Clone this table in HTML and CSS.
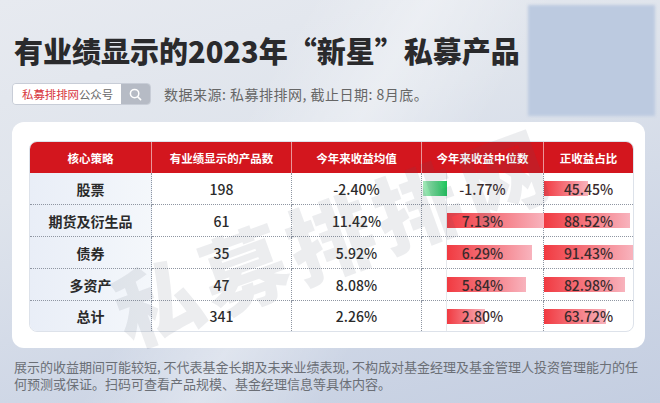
FILE: index.html
```html
<!DOCTYPE html>
<html lang="zh-CN">
<head>
<meta charset="utf-8">
<title>有业绩显示的2023年“新星”私募产品</title>
<link rel="stylesheet" href="styles.css">
</head>
<body>
<div class="glow"></div>
<div class="page">
  <h1 class="title">有业绩显示的2023年“新星”私募产品</h1>
  <div class="sub">
    <div class="search">
      <div class="search-txt"><span class="brand">私募排排网</span>公众号</div>
      <div class="search-btn">
        <svg width="13" height="13" viewBox="0 0 13 13"><circle cx="5.6" cy="5.6" r="4.2" fill="none" stroke="#fff" stroke-width="1.5"/><line x1="8.7" y1="8.7" x2="11.6" y2="11.6" stroke="#fff" stroke-width="1.6" stroke-linecap="round"/></svg>
      </div>
    </div>
    <div class="source">数据来源: 私募排排网, 截止日期: 8月底。</div>
  </div>
  <div class="card">
    <table class="tbl">
      <colgroup>
        <col class="c1"><col class="c2"><col class="c3"><col class="c4"><col class="c5">
      </colgroup>
      <thead>
        <tr><th>核心策略</th><th>有业绩显示的产品数</th><th>今年来收益均值</th><th>今年来收益中位数</th><th>正收益占比</th></tr>
      </thead>
      <tbody>
        <tr>
          <td class="name">股票</td><td class="num">198</td><td class="num">-2.40%</td>
          <td class="num bar axis"><span class="fill neg" style="width:24px"></span><span class="val">-1.77%</span></td>
          <td class="num bar"><span class="fill" style="width:44px"></span><span class="val">45.45%</span></td>
        </tr>
        <tr>
          <td class="name">期货及衍生品</td><td class="num">61</td><td class="num">11.42%</td>
          <td class="num bar axis"><span class="fill pos" style="width:97px"></span><span class="val">7.13%</span></td>
          <td class="num bar"><span class="fill" style="width:86px"></span><span class="val">88.52%</span></td>
        </tr>
        <tr>
          <td class="name">债券</td><td class="num">35</td><td class="num">5.92%</td>
          <td class="num bar axis"><span class="fill pos" style="width:85px"></span><span class="val">6.29%</span></td>
          <td class="num bar"><span class="fill" style="width:89px"></span><span class="val">91.43%</span></td>
        </tr>
        <tr>
          <td class="name">多资产</td><td class="num">47</td><td class="num">8.08%</td>
          <td class="num bar axis"><span class="fill pos" style="width:79px"></span><span class="val">5.84%</span></td>
          <td class="num bar"><span class="fill" style="width:81px"></span><span class="val">82.98%</span></td>
        </tr>
        <tr>
          <td class="name">总计</td><td class="num">341</td><td class="num">2.26%</td>
          <td class="num bar axis"><span class="fill pos" style="width:38px"></span><span class="val">2.80%</span></td>
          <td class="num bar"><span class="fill" style="width:62px"></span><span class="val">63.72%</span></td>
        </tr>
      </tbody>
    </table>
    <div class="watermark">私募排排网</div>
  </div>
  <p class="note">展示的收益期间可能较短, 不代表基金长期及未来业绩表现, 不构成对基金经理及基金管理人投资管理能力的任何预测或保证。扫码可查看产品规模、基金经理信息等具体内容。</p>
</div>
</body>
</html>
```

FILE: styles.css
```css
html, body {
  margin: 0;
  padding: 0;
}
body {
  width: 660px;
  height: 403px;
  overflow: hidden;
  position: relative;
  font-family: "Noto Sans CJK SC", "Noto Sans", sans-serif;
  background:
    linear-gradient(120deg, rgba(255,255,255,0) 35%, rgba(255,255,255,0.35) 48%, rgba(255,255,255,0) 62%),
    linear-gradient(165deg, #e7eaf0 0%, #dfe4ec 35%, #cfd7e6 70%, #c4cee1 100%);
}
.glow {
  position: absolute;
  left: 528px;
  top: 5px;
  width: 127px;
  height: 111px;
  background: #bccae0;
  filter: blur(1.5px);
}
.page {
  position: relative;
  padding: 0 15px 0 12px;
}
.title {
  margin: 0 0 0 2px;
  padding-top: 32px;
  font-size: 29px;
  line-height: 36px;
  font-weight: 900;
  color: #2a2a2c;
  white-space: nowrap;
}
.sub {
  display: flex;
  align-items: center;
  margin-top: 15px;
  height: 22px;
}
.search {
  display: flex;
  height: 20px;
  border: 1px solid #c8cdd7;
  border-radius: 4px;
  overflow: hidden;
}
.search-txt {
  background: #fff;
  width: 99px;
  padding-left: 9px;
  font-size: 11.4px;
  line-height: 20px;
  color: #6a6a6a;
  white-space: nowrap;
}
.brand {
  color: #d7343b;
}
.search-btn {
  width: 29px;
  background: #b6bbc5;
  display: flex;
  align-items: center;
  justify-content: center;
}
.source {
  margin-left: 13px;
  font-size: 14px;
  letter-spacing: 0.5px;
  color: #666;
  white-space: nowrap;
}
.card {
  position: relative;
  margin-top: 17px;
  background: #fff;
  border-radius: 12px;
  padding: 19px 13px 16px 17px;
}
.tbl {
  position: relative;
  width: 603px;
  table-layout: fixed;
  border-collapse: separate;
  border-spacing: 0;
  border: 1px solid #dde2ea;
  border-radius: 8px;
  overflow: hidden;
}
.c1 { width: 122px; }
.c2 { width: 140px; }
.c3 { width: 130px; }
.c4 { width: 122px; }
.c5 { width: 89px; }
.tbl th {
  background: #d3161e;
  color: #fff;
  font-size: 11.5px;
  font-weight: 700;
  height: 31px;
  padding: 0;
  border-right: 1px solid rgba(255,255,255,0.55);
  text-align: center;
}
.tbl th:last-child { border-right: 0; }
.tbl td {
  height: 31px;
  padding: 0;
  text-align: center;
  color: #2a2a2a;
  font-size: 14px;
  border-right: 1px dotted #8f96a2;
  border-bottom: 1px dotted #8f96a2;
}
.tbl td:last-child { border-right: 0; }
.tbl tr:last-child td { border-bottom: 0; height: 30px; }
.name {
  font-weight: 700;
  background: linear-gradient(90deg, #e9eef7, #f4f7fb);
}
.num {
  font-weight: 500;
}
.bar {
  position: relative;
}
.axis::before {
  content: "";
  position: absolute;
  left: 24px;
  top: 0;
  bottom: 0;
  width: 1px;
  background: #e6e8ec;
}
.fill {
  position: absolute;
  left: 0;
  top: 50%;
  height: 15px;
  margin-top: -7.5px;
  background: linear-gradient(90deg, #f13a41, #f8b3bd);
}
.fill.pos {
  left: 25px;
}
.fill.neg {
  left: 1px;
  background: linear-gradient(90deg, #a4e7b9, #1cc35a);
}
.val {
  position: relative;
  color: #3a2a2c;
}
.watermark {
  position: absolute;
  left: 320px;
  top: 112px;
  transform: translate(-50%, -50%) rotate(-20deg);
  font-size: 86px;
  line-height: 1;
  font-weight: 900;
  letter-spacing: 6px;
  color: rgba(80, 88, 105, 0.11);
  white-space: nowrap;
  pointer-events: none;
}
.note {
  margin: 10px 0 0 2px;
  width: 634px;
  font-size: 13px;
  line-height: 17px;
  color: #6b6f76;
}
```
